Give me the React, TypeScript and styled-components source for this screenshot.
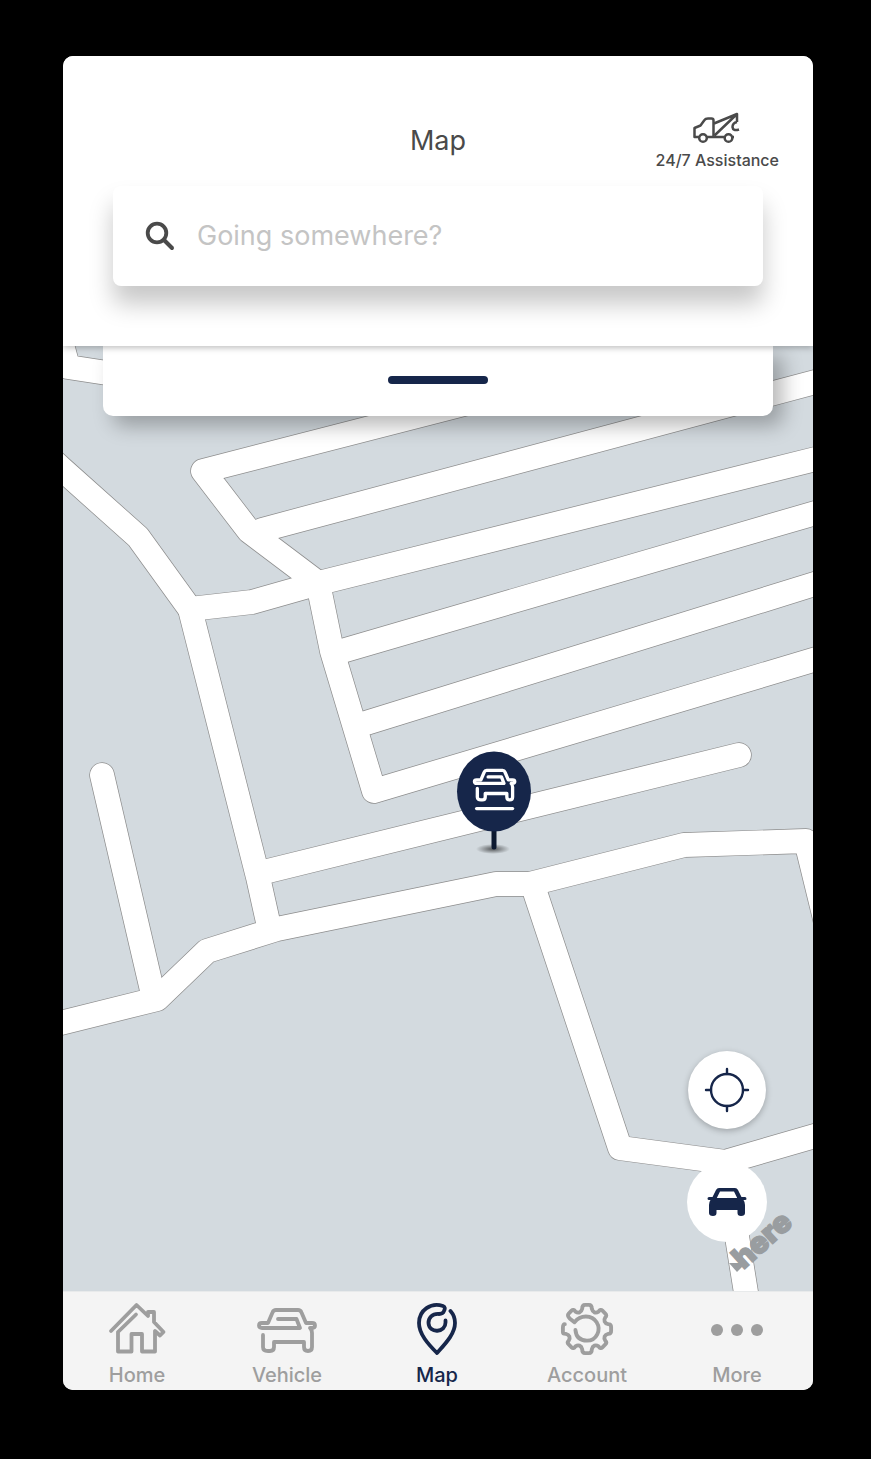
import React from "react";
import styled, { createGlobalStyle } from "styled-components";

const navy = "#16264a";
const grey = "#9e9e9e";
const ink = "#4a4a4a";

const GlobalStyle = createGlobalStyle`
  *, *::before, *::after { box-sizing: border-box; }
  html { background: #000; }
  body {
    margin: 0;
    background: #000;
    color: ${ink};
    font-family: Inter, "Liberation Sans", sans-serif;
  }
`;

const Stage = styled.div`
  display: flex;
  min-height: 100vh;
  padding: 56px 58px 69px 63px;
`;

const Phone = styled.main`
  flex: 1;
  display: flex;
  flex-direction: column;
  min-width: 0;
  overflow: hidden;
  border-radius: 10px;
  background: #fff;
`;

const Header = styled.header`
  position: relative;
  z-index: 2;
  display: flex;
  flex-direction: column;
  padding: 56px 50px 60px;
  background: #fff;
  box-shadow: 0 2px 6px rgba(0, 0, 0, 0.25);
`;

const TitleRow = styled.div`
  display: grid;
  grid-template-columns: 1fr auto 1fr;
  align-items: center;
  height: 58px;
  margin: 0 -16px 16px;
`;

const Title = styled.h1`
  grid-column: 2;
  margin: 0;
  font-size: 27px;
  font-weight: 400;
  line-height: 32px;
`;

const Assistance = styled.button`
  justify-self: end;
  display: flex;
  flex-direction: column;
  align-items: center;
  gap: 6px;
  padding: 0;
  border: 0;
  background: none;
  color: ${ink};
  font: 500 16px/20px Inter, "Liberation Sans", sans-serif;
  white-space: nowrap;
  cursor: pointer;
`;

const SearchBox = styled.label`
  display: flex;
  align-items: center;
  gap: 22px;
  height: 100px;
  padding: 0 32px;
  border-radius: 8px;
  background: #fff;
  box-shadow: 0 18px 24px rgba(0, 0, 0, 0.22);
`;

const SearchInput = styled.input`
  flex: 1;
  min-width: 0;
  padding: 0;
  border: 0;
  outline: 0;
  background: none;
  color: ${ink};
  font: 400 27px/36px Inter, "Liberation Sans", sans-serif;
  &::placeholder { color: #c4c4c4; opacity: 1; }
`;

const MapArea = styled.section`
  position: relative;
  flex: 1;
  display: flex;
  flex-direction: column;
  min-height: 600px;
  overflow: hidden;
  background: #d3dadf;
`;

const MapCanvas = styled.svg`
  position: absolute;
  inset: 0;
  width: 100%;
  height: 100%;
`;

const Drawer = styled.div`
  position: relative;
  display: flex;
  align-items: center;
  justify-content: center;
  height: 70px;
  margin: 0 40px;
  padding-bottom: 2px;
  border-radius: 0 0 10px 10px;
  background: #fff;
  box-shadow: 10px 10px 20px rgba(0, 0, 0, 0.28);
`;

const Handle = styled.button`
  width: 100px;
  height: 8px;
  padding: 0;
  border: 0;
  border-radius: 4px;
  background: ${navy};
  cursor: pointer;
`;

const MapControls = styled.div`
  position: absolute;
  right: 46px;
  bottom: 49px;
  display: flex;
  flex-direction: column;
  align-items: center;
  gap: 33px;
`;

const RoundButton = styled.button<{ $raised?: boolean }>`
  display: grid;
  place-items: center;
  width: ${(p) => (p.$raised ? 78 : 80)}px;
  height: ${(p) => (p.$raised ? 78 : 80)}px;
  padding: 0;
  border: 0;
  border-radius: 50%;
  background: #fff;
  color: ${navy};
  box-shadow: ${(p) => (p.$raised ? "0 2px 6px rgba(0, 0, 0, 0.25)" : "none")};
  cursor: pointer;
`;

const TabBar = styled.nav`
  display: grid;
  grid-template-columns: repeat(5, 1fr);
  height: 99px;
  border-top: 1px solid #e8eaeb;
  background: #f4f4f4;
`;

const Tab = styled.a<{ $active?: boolean }>`
  display: flex;
  flex-direction: column;
  align-items: center;
  gap: 7px;
  padding: 10px 2px 0 0;
  color: ${(p) => (p.$active ? navy : grey)};
  font-size: 20px;
  font-weight: 500;
  line-height: 24px;
  text-decoration: none;
`;

const TowTruckIcon = () => (
  <svg width="48" height="32" viewBox="0 0 48 32" fill="none" stroke="currentColor" strokeWidth="2.5" strokeLinejoin="round" aria-hidden="true">
    <path d="M6 25H1.500V16L7.500 13.500L11.500 8Q12.500 6.500 15 6.500H18.500Q20.500 6.500 20.500 8.500V24.500M14 25H31.500M39.500 25H41" />
    <path d="M21 11.500L44 2V10M21.500 23.500L44 2M44 10Q39.500 11 39.500 15Q40 19.500 46 17.500" />
    <circle cx="10" cy="26" r="3.800" />
    <circle cx="35.500" cy="26" r="3.800" />
  </svg>
);

const SearchIcon = () => (
  <svg width="30" height="30" viewBox="0 0 30 30" fill="none" stroke={ink} aria-hidden="true">
    <circle cx="12" cy="12" r="9.300" strokeWidth="3.800" />
    <path d="M19 19L27 27" strokeWidth="4" strokeLinecap="round" />
  </svg>
);

const CarOutline = () => (
  <path d="M21 11H39.500L43 20H5Q2 20 2 17.500Q2 15 5 15H11L15.500 4.500Q16.500 2 19 2H41Q43.500 2 44.500 4.500L49 15H55Q58 15 58 17.500Q58 20 55 20H53Q55 22 55 25V39Q55 43 51 43Q47 43 47 39V34H17V39Q17 43 13 43H11Q6 43 6 39V27" />
);

const HomeIcon = () => (
  <svg width="60" height="54" viewBox="0 0 60 54" fill="none" stroke="currentColor" strokeWidth="3.800" strokeLinecap="round" strokeLinejoin="round" aria-hidden="true">
    <path d="M4 29L29.500 3L41 14V10H47V20L56.500 30L53 33.500L48 29V49.500H35V32H24.500V49.500H11V30L29 12.500" />
  </svg>
);

const VehicleIcon = () => (
  <svg width="60" height="54" viewBox="0 -6 60 54" fill="none" stroke="currentColor" strokeWidth="3.800" strokeLinecap="round" strokeLinejoin="round" aria-hidden="true">
    <CarOutline />
  </svg>
);

const PinIcon = () => (
  <svg width="60" height="54" viewBox="0 0 60 54" fill="none" stroke="currentColor" strokeWidth="3.800" strokeLinecap="round" strokeLinejoin="round" aria-hidden="true">
    <path d="M43.500 9Q48 14 48 21C48 32 38 42 30 51C21 42 12 32 12 21C12 8 24 0 36 4Q39 5 37 9Q36 12 32 12C25 11.500 21.500 16 21.500 21C22 32 39 31 38.500 20V18.500" />
  </svg>
);

const GearIcon = () => (
  <svg width="60" height="54" viewBox="-1 -1 62 56" fill="none" stroke="currentColor" strokeWidth="4" strokeLinecap="round" strokeLinejoin="round" aria-hidden="true">
    <path d="M7 22Q5 22 5 26V30Q5 32 8 32C12 33 13 36 11 39Q9 41 11 43L14 46Q16 48 18 45C21 43 24 44 25 48Q25 52 28 52H32Q35 52 35 48C36 44 39 43 42 45Q44 48 46 46L49 43Q51 41 49 39C47 36 48 33 52 32Q55 32 55 29V25Q55 22 52 22C48 21 47 18 49 15Q51 13 49 11L46 8Q44 6 42 9C39 11 36 10 35 6Q35 2 32 2H28Q25 2 25 6C24 10 21 11 18 9Q16 6 14 8L11 11Q9 13 12 16L17 20C23 12 35 12 40 20C45 28 40 39 30 39Q19 39 18 28" />
  </svg>
);

const MoreIcon = () => (
  <svg width="60" height="54" viewBox="0 0 60 54" fill="currentColor" aria-hidden="true">
    <circle cx="10" cy="28" r="6" />
    <circle cx="30" cy="28" r="6" />
    <circle cx="50" cy="28" r="6" />
  </svg>
);

const LocateIcon = () => (
  <svg width="46" height="46" viewBox="0 0 46 46" fill="none" stroke="currentColor" strokeWidth="2.400" strokeLinecap="round" aria-hidden="true">
    <circle cx="23" cy="23" r="16" />
    <path d="M23 2V7M23 39V44M2 23H7M39 23H44" />
  </svg>
);

const CarIcon = () => (
  <svg width="40" height="30" viewBox="0 0 40 30" fill="currentColor" aria-hidden="true">
    <path fillRule="evenodd" d="M12 1H28Q30 1 31 3L34.500 10H38Q39.500 10 39.500 12Q39.500 13 38 13H36.500Q38 15 38 18V26Q38 29 34 29Q30.500 29 30.500 26V23H9.500V26Q9.500 29 6 29Q2 29 2 26V18Q2 15 3.500 13H2Q.5 13 .5 11.500Q.5 10 2 10H5.500L9 3Q10 1 12 1ZM13 4.500L9.800 11H30.200L27 4.500Z" />
  </svg>
);

const roads = [
  "M120 375L68 367L58 330",
  "M40 449L63 470L138 537L190 609L258 877L268 922",
  "M190 609L252 602L319 583L860 448",
  "M860 302L203 471L249 531L318 583L332 651L374 791L860 646",
  "M262 530L860 370",
  "M342 651L860 500",
  "M366 723L860 570",
  "M268 871L739 755",
  "M102 775L152 990",
  "M20 1033L157 999L207 951L277 929L496 884L530 884L684 845L806 841L840 980",
  "M533 886L620 1148L725 1162L860 1123",
  "M725 1162L752 1330",
];

const StreetMap = () => (
  <MapCanvas viewBox="63 346 750 945" preserveAspectRatio="xMidYMid slice" role="img" aria-label="Street map">
    <g fill="none" strokeLinecap="round" strokeLinejoin="round">
      {roads.map((d) => <path key={d} d={d} stroke="#8d8d8d" strokeWidth="25.400" />)}
      {roads.map((d) => <path key={d} d={d} stroke="#fff" strokeWidth="24" />)}
    </g>
    <defs>
      <radialGradient id="pinShade">
        <stop offset="0" stopColor="#000" stopOpacity="0.6" />
        <stop offset="1" stopColor="#000" stopOpacity="0" />
      </radialGradient>
    </defs>
    <ellipse cx="493" cy="849" rx="17" ry="5" fill="url(#pinShade)" />
    <path d="M494 828V847" stroke="#0c1930" strokeWidth="5" strokeLinecap="round" />
    <ellipse cx="494" cy="791.500" rx="37" ry="40" fill={navy} />
    <g transform="translate(473 769) scale(.72)" fill="none" stroke="#fff" strokeWidth="4.600" strokeLinecap="round" strokeLinejoin="round">
      <CarOutline />
      <path d="M5 55H55" />
    </g>
    <g transform="translate(748 1266) rotate(-42)" fill="#999da0" stroke="#999da0" strokeWidth="1.500">
      <text x="-6" y="0" fontFamily="Inter, sans-serif" fontSize="30" fontWeight="900">here</text>
    </g>
    <path d="M729 1263H746L737 1272Z" fill="#999da0" />
  </MapCanvas>
);

const tabs = [
  { label: "Home", icon: <HomeIcon /> },
  { label: "Vehicle", icon: <VehicleIcon /> },
  { label: "Map", icon: <PinIcon />, active: true },
  { label: "Account", icon: <GearIcon /> },
  { label: "More", icon: <MoreIcon /> },
];

export default function App() {
  return (
    <>
      <GlobalStyle />
      <Stage>
        <Phone>
          <Header>
            <TitleRow>
              <Title>Map</Title>
              <Assistance type="button">
                <TowTruckIcon />
                24/7 Assistance
              </Assistance>
            </TitleRow>
            <SearchBox>
              <SearchIcon />
              <SearchInput type="text" placeholder="Going somewhere?" aria-label="Search destination" />
            </SearchBox>
          </Header>
          <MapArea>
            <StreetMap />
            <Drawer>
              <Handle type="button" aria-label="Expand panel" />
            </Drawer>
            <MapControls>
              <RoundButton type="button" $raised aria-label="My location"><LocateIcon /></RoundButton>
              <RoundButton type="button" aria-label="Find vehicle"><CarIcon /></RoundButton>
            </MapControls>
          </MapArea>
          <TabBar>
            {tabs.map((t) => (
              <Tab key={t.label} href={`#${t.label.toLowerCase()}`} $active={t.active} aria-current={t.active ? "page" : undefined}>
                {t.icon}
                {t.label}
              </Tab>
            ))}
          </TabBar>
        </Phone>
      </Stage>
    </>
  );
}
